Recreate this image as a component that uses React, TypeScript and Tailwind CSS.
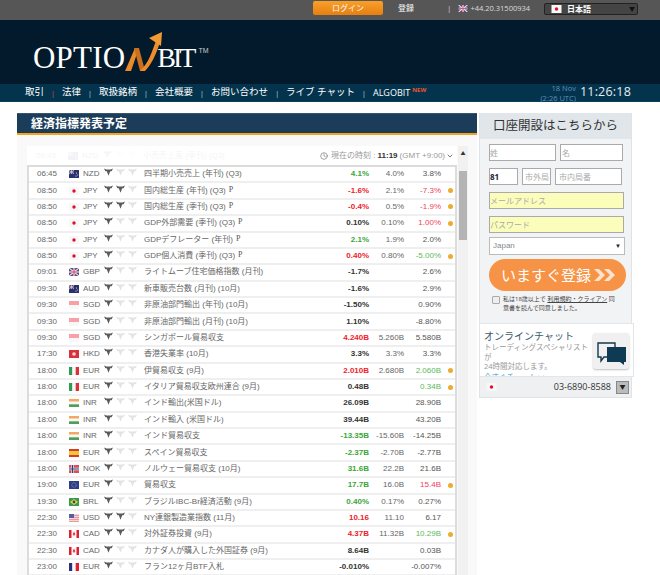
import React from "react";
import { Clock, ChevronDown } from "lucide-react";

type Row = {
  time: string;
  flag: string;
  ccy: string;
  bulls: number;
  name: string;
  p?: boolean;
  actual: string;
  actualColor?: string;
  forecast?: string;
  prev: string;
  prevColor?: string;
  dot?: boolean;
};

const green = "text-[#3aa63a]";
const red = "text-[#f0202c]";
const pink = "text-[#f2405a]";
const lime = "text-[#5cb85c]";

const rows: Row[] = [
  { time: "06:45", flag: "nz", ccy: "NZD", bulls: 1, name: "四半期小売売上 (年刊) (Q3)", actual: "4.1%", actualColor: green, forecast: "4.0%", prev: "3.8%" },
  { time: "08:50", flag: "jp", ccy: "JPY", bulls: 2, name: "国内総生産 (年刊) (Q3)", p: true, actual: "-1.6%", actualColor: red, forecast: "2.1%", prev: "-7.3%", prevColor: pink, dot: true },
  { time: "08:50", flag: "jp", ccy: "JPY", bulls: 2, name: "国内総生産 (季刊) (Q3)", p: true, actual: "-0.4%", actualColor: red, forecast: "0.5%", prev: "-1.9%", prevColor: pink, dot: true },
  { time: "08:50", flag: "jp", ccy: "JPY", bulls: 1, name: "GDP外部需要 (季刊) (Q3)", p: true, actual: "0.10%", forecast: "0.10%", prev: "1.00%", prevColor: pink, dot: true },
  { time: "08:50", flag: "jp", ccy: "JPY", bulls: 1, name: "GDPデフレーター (年刊)", p: true, actual: "2.1%", actualColor: green, forecast: "1.9%", prev: "2.0%" },
  { time: "08:50", flag: "jp", ccy: "JPY", bulls: 1, name: "GDP個人消費 (季刊) (Q3)", p: true, actual: "0.40%", actualColor: red, forecast: "0.80%", prev: "-5.00%", prevColor: lime, dot: true },
  { time: "09:01", flag: "gb", ccy: "GBP", bulls: 1, name: "ライトムーブ住宅価格指数 (月刊)", actual: "-1.7%", prev: "2.6%" },
  { time: "09:30", flag: "au", ccy: "AUD", bulls: 1, name: "新車販売台数 (月刊) (10月)", actual: "-1.6%", prev: "2.9%" },
  { time: "09:30", flag: "sg", ccy: "SGD", bulls: 1, name: "非原油部門輸出 (年刊) (10月)", actual: "-1.50%", prev: "0.90%" },
  { time: "09:30", flag: "sg", ccy: "SGD", bulls: 1, name: "非原油部門輸出 (月刊) (10月)", actual: "1.10%", prev: "-8.80%" },
  { time: "09:30", flag: "sg", ccy: "SGD", bulls: 1, name: "シンガポール貿易収支", actual: "4.240B", actualColor: red, forecast: "5.260B", prev: "5.580B" },
  { time: "17:30", flag: "hk", ccy: "HKD", bulls: 1, name: "香港失業率 (10月)", actual: "3.3%", forecast: "3.3%", prev: "3.3%" },
  { time: "18:00", flag: "it", ccy: "EUR", bulls: 1, name: "伊貿易収支 (9月)", actual: "2.010B", actualColor: red, forecast: "2.680B", prev: "2.060B", prevColor: lime, dot: true },
  { time: "18:00", flag: "it", ccy: "EUR", bulls: 1, name: "イタリア貿易収支欧州連合 (9月)", actual: "0.48B", prev: "0.34B", prevColor: lime, dot: true },
  { time: "18:00", flag: "in", ccy: "INR", bulls: 1, name: "インド輸出(米国ドル)", actual: "26.09B", prev: "28.90B" },
  { time: "18:00", flag: "in", ccy: "INR", bulls: 1, name: "インド輸入 (米国ドル)", actual: "39.44B", prev: "43.20B" },
  { time: "18:00", flag: "in", ccy: "INR", bulls: 1, name: "インド貿易収支", actual: "-13.35B", actualColor: green, forecast: "-15.60B", prev: "-14.25B" },
  { time: "18:00", flag: "es", ccy: "EUR", bulls: 1, name: "スペイン貿易収支", actual: "-2.37B", actualColor: green, forecast: "-2.70B", prev: "-2.77B" },
  { time: "18:00", flag: "no", ccy: "NOK", bulls: 1, name: "ノルウェー貿易収支 (10月)", actual: "31.6B", actualColor: green, forecast: "22.2B", prev: "21.6B" },
  { time: "19:00", flag: "eu", ccy: "EUR", bulls: 1, name: "貿易収支", actual: "17.7B", actualColor: green, forecast: "16.0B", prev: "15.4B", prevColor: pink, dot: true },
  { time: "19:30", flag: "br", ccy: "BRL", bulls: 1, name: "ブラジルIBC-Br経済活動 (9月)", actual: "0.40%", actualColor: green, forecast: "0.17%", prev: "0.27%" },
  { time: "22:30", flag: "us", ccy: "USD", bulls: 2, name: "NY連銀製造業指数 (11月)", actual: "10.16", actualColor: red, forecast: "11.10", prev: "6.17" },
  { time: "22:30", flag: "ca", ccy: "CAD", bulls: 2, name: "対外証券投資 (9月)", actual: "4.37B", actualColor: red, forecast: "11.32B", prev: "10.29B", prevColor: lime, dot: true },
  { time: "22:30", flag: "ca", ccy: "CAD", bulls: 1, name: "カナダ人が購入した外国証券 (9月)", actual: "8.64B", prev: "0.03B" },
  { time: "23:00", flag: "fr", ccy: "EUR", bulls: 1, name: "フラン12ヶ月BTF入札", actual: "-0.010%", prev: "-0.007%" },
];

const Flag = ({ code, className = "w-[10px] h-[8px]" }: { code: string; className?: string }) => {
  const union = (
    <>
      <rect width="10" height="8" fill="#3b4d8f" />
      <path d="M0 0L10 8M10 0L0 8" stroke="#e8dfe4" strokeWidth="1.2" />
      <path d="M5 0V8M0 4H10" stroke="#e8dfe4" strokeWidth="2.2" />
      <path d="M5 0V8M0 4H10" stroke="#cf4a5c" strokeWidth="1" />
    </>
  );
  const southern = (
    <>
      <rect width="10" height="8" fill="#28306f" />
      <path d="M0 0L5 4M5 0L0 4M2.5 0V4M0 2H5" stroke="#d9c3ce" strokeWidth=".8" />
      <circle cx="7.5" cy="3" r=".6" fill="#eee" />
      <circle cx="7" cy="6" r=".6" fill="#eee" />
      <circle cx="8.7" cy="5" r=".5" fill="#eee" />
    </>
  );
  return (
    <svg viewBox="0 0 10 8" className={`${className} shrink-0`}>
      {code === "jp" && (
        <>
          <rect width="10" height="8" fill="#f7f7f7" />
          <circle cx="5" cy="4" r="1.7" fill="#e0102a" />
        </>
      )}
      {code === "gb" && union}
      {code === "nz" && southern}
      {code === "au" && southern}
      {code === "sg" && (
        <>
          <rect width="10" height="8" fill="#f7f7f7" />
          <rect width="10" height="4" fill="#f7a0a6" />
        </>
      )}
      {code === "hk" && (
        <>
          <rect width="10" height="8" fill="#d9303c" />
          <circle cx="5" cy="4" r="1.8" fill="#f6d4d4" />
        </>
      )}
      {code === "it" && (
        <>
          <rect width="3.4" height="8" fill="#2f9a54" />
          <rect x="3.4" width="3.3" height="8" fill="#f6f6f6" />
          <rect x="6.7" width="3.3" height="8" fill="#d9303c" />
        </>
      )}
      {code === "in" && (
        <>
          <rect width="10" height="2.7" fill="#f5a860" />
          <rect y="2.7" width="10" height="2.6" fill="#f6f6f6" />
          <rect y="5.3" width="10" height="2.7" fill="#4f9f5a" />
        </>
      )}
      {code === "es" && (
        <>
          <rect width="10" height="8" fill="#d63a2e" />
          <rect y="2" width="10" height="4" fill="#f5c52f" />
        </>
      )}
      {code === "no" && (
        <>
          <rect width="10" height="8" fill="#d8505c" />
          <path d="M3.5 0V8M0 4H10" stroke="#eee" strokeWidth="2.4" />
          <path d="M3.5 0V8M0 4H10" stroke="#2f3f80" strokeWidth="1.2" />
        </>
      )}
      {code === "eu" && (
        <>
          <rect width="10" height="8" fill="#2b3f8f" />
          <circle cx="5" cy="4" r="2.2" fill="none" stroke="#c9b44a" strokeWidth=".7" strokeDasharray=".8 .6" />
        </>
      )}
      {code === "br" && (
        <>
          <rect width="10" height="8" fill="#3a9a4c" />
          <path d="M5 1L9 4L5 7L1 4Z" fill="#e8d13c" />
          <circle cx="5" cy="4" r="1.4" fill="#2d4a8c" />
        </>
      )}
      {code === "us" && (
        <>
          <rect width="10" height="8" fill="#f3d6d8" />
          <path d="M0 1.5H10M0 3.5H10M0 5.5H10M0 7.5H10" stroke="#e88a90" strokeWidth=".8" />
          <rect width="5" height="4" fill="#5660a0" />
        </>
      )}
      {code === "ca" && (
        <>
          <rect width="10" height="8" fill="#f7f7f7" />
          <rect width="2.5" height="8" fill="#e02030" />
          <rect x="7.5" width="2.5" height="8" fill="#e02030" />
          <path d="M5 1.8L6.4 4.6L5.3 4.7V6H4.7V4.7L3.6 4.6Z" fill="#e02030" />
        </>
      )}
      {code === "fr" && (
        <>
          <rect width="3.4" height="8" fill="#23337f" />
          <rect x="3.4" width="3.3" height="8" fill="#f6f6f6" />
          <rect x="6.7" width="3.3" height="8" fill="#e02030" />
        </>
      )}
    </svg>
  );
};

const Bull = ({ on }: { on: boolean }) => (
  <svg viewBox="0 0 9 8" className="w-[9px] h-[8px]">
    <path
      d="M0 .5L2.4 1.6H6.6L9 .5L7.6 3.2H6.2L4.5 7.8L2.8 3.2H1.4Z"
      fill={on ? "#5a5a5a" : "#e3e3e3"}
    />
  </svg>
);

const Bulls = ({ n }: { n: number }) => (
  <div className="flex gap-[3px] w-[40px] -mt-[4px] shrink-0">
    <Bull on={n >= 1} />
    <Bull on={n >= 2} />
    <Bull on={n >= 3} />
  </div>
);

const TableRow = ({ r }: { r: Row }) => (
  <div className="flex items-center h-[16.375px] shrink-0 border-b-2 border-[#efefef] bg-white pl-[8px] text-[8px] text-[#666] font-['Liberation_Sans','Noto_Sans_CJK_JP',sans-serif]">
    <span className="w-[32px] shrink-0">{r.time}</span>
    <Flag code={r.flag} />
    <span className="w-[21px] ml-[4px] shrink-0">{r.ccy}</span>
    <Bulls n={r.bulls} />
    <span className="w-[170px] shrink-0 whitespace-nowrap">
      {r.name}
      {r.p && <span className="ml-[3px] font-['Liberation_Serif',serif] text-[8px] relative -top-[1px] text-[#555]">P</span>}
    </span>
    <span className={`w-[55px] shrink-0 text-right font-bold whitespace-nowrap ${r.actualColor ?? "text-[#333]"}`}>{r.actual}</span>
    <span className="w-[35px] shrink-0 text-right whitespace-nowrap">{r.forecast}</span>
    <span className={`w-[37px] shrink-0 text-right whitespace-nowrap ${r.prevColor ?? "text-[#555]"}`}>{r.prev}</span>
    {r.dot && <span className="ml-[7px] w-[5px] h-[5px] rounded-full bg-[#eeab2f] shrink-0" />}
  </div>
);

const Field = ({ label, className, value }: { label?: string; className: string; value?: string }) => (
  <div className={`h-[17px] border border-[#aaa] flex items-center text-[8px] overflow-hidden whitespace-nowrap ${className}`}>
    {value ? <span className="text-[#223] font-bold">{value}</span> : <span className="text-[#aaa]">{label}</span>}
  </div>
);

const Logo = () => (
  <div className="flex items-end font-['Liberation_Serif',serif] text-white text-[31px] leading-[24px] mt-[11px] ml-[33px]">
    <span className="tracking-[.2px]">OPTIO</span>
    <svg viewBox="0 0 38 42" className="w-[38px] h-[42px] -mb-[3px] -mr-[6px]">
      <path d="M0 40L10 17L14 17L6 40Z" fill="#e98a2b" />
      <path d="M9 17L14 17L20 40L15 40Z" fill="#c96f1d" />
      <path d="M15 40C24 32 27 20 31 10L35 11C31 24 26 34 20 40Z" fill="#f08d2a" />
      <path d="M24 7L37 1L36 15Z" fill="#f29a35" />
    </svg>
    <span className="text-[28px] tracking-[-3px]">BIT</span>
    <span className="text-[7px] leading-none self-start ml-[5px] mt-[16px] font-['Liberation_Sans',sans-serif] text-[#ccc]">TM</span>
  </div>
);

const navItems = ["取引", "法律", "取扱銘柄", "会社概要", "お問い合わせ", "ライブ チャット"];

export default function App() {
  return (
    <div className="w-[660px] h-[575px] overflow-hidden bg-white font-['Open_Sans','Noto_Sans_CJK_JP',sans-serif]">
      {/* top bar */}
      <div className="h-[20px] bg-[#565656] flex items-start text-[8px] pl-[313px]">
        <div className="w-[70px] h-[14px] mt-[1px] rounded-[2px] bg-gradient-to-b from-[#f7a02a] to-[#e87e10] text-white flex items-center justify-center">ログイン</div>
        <span className="ml-[15px] mt-[2px] font-bold text-[#d5d5d5]">登録</span>
        <span className="ml-[33px] mt-[2px] text-[#ccc]">|</span>
        <Flag code="gb" className="ml-[7px] mt-[5px] w-[10px] h-[7px]" />
        <span className="ml-[2px] mt-[3px] text-[#ddd] text-[7.5px]">+44.20.31500934</span>
        <div className="ml-[14px] mt-[3px] w-[94px] h-[12px] rounded-[2px] bg-[#444] border border-[#222] flex items-center pl-[6px] pr-[2px]">
          <Flag code="jp" className="w-[11px] h-[8px]" />
          <span className="ml-[5px] text-white font-bold">日本語</span>
          <span className="ml-auto text-[#111] text-[6px]">▼</span>
        </div>
      </div>

      {/* logo band */}
      <div className="h-[64px] bg-[#021a2b] overflow-hidden">
        <Logo />
      </div>

      {/* nav */}
      <div className="h-[18px] bg-[#03334d] flex items-center pl-[25px] pr-[29px] text-white text-[9.5px] whitespace-nowrap border-b border-[#0a4058]">
        {navItems.map((n, i) => (
          <React.Fragment key={n}>
            <span>{n}</span>
            <span className={`mx-[6.8px] text-[8px] ${i === 0 ? "text-[#d05050]" : "text-[#b8c8d0]"}`}>|</span>
          </React.Fragment>
        ))}
        <span className="text-[9px]">ALGOBIT</span>
        <span className="text-[6px] font-bold text-[#e8552d] ml-[2px] -mt-[5px]">NEW</span>
        <div className="ml-auto text-right text-[7.5px] leading-[10px] text-[#5b94b8] mr-[4px]">
          18 Nov
          <br />
          (2:26 UTC)
        </div>
        <span className="text-[12.5px] text-[#e8eef2] tracking-[.2px]">11:26:18</span>
      </div>

      {/* main */}
      <div className="flex pt-[11px] pl-[17px] items-start">
        <div className="w-[460px] shrink-0">
          <div className="h-[22px] bg-[#1c3d5a] border-t border-[#37566e] border-b-2 border-b-[#f5a31a] text-white font-bold text-[12px] flex items-center pl-[14px]">経済指標発表予定</div>
          <div className="bg-[#f9f9f9] pl-[10px] pt-[11px] pr-[9px] h-[440px] flex gap-[1px]">
            <div className="w-[430px] shrink-0">
              <div className="h-[19px] bg-white flex items-center pl-[9px] pr-[3px] text-[8px] relative font-['Liberation_Sans','Noto_Sans_CJK_JP',sans-serif]">
                <div className="flex items-center opacity-[.05] text-[#333]">
                  <span className="w-[32px]">06:45</span>
                  <Flag code="nz" />
                  <span className="w-[21px] ml-[4px]">NZD</span>
                  <Bulls n={1} />
                  <span>小売売上高 (季刊) (Q3)</span>
                </div>
                <div className="ml-auto flex items-center text-[#999]">
                  <Clock className="w-[8px] h-[8px] mr-[3px] text-[#777]" />
                  <span>現在の時刻 : </span>
                  <span className="font-bold text-[#333] ml-[2px]">11:19</span>
                  <span className="ml-[2px]">(GMT +9:00)</span>
                  <ChevronDown className="w-[8px] h-[8px] ml-[1px] text-[#333]" />
                </div>
              </div>
              <div className="border-t-2 border-l-2 border-r-2 border-[#dcdcdc]">
                {rows.map((r, i) => (
                  <TableRow key={i} r={r} />
                ))}
              </div>
            </div>
            <div className="w-[10px] bg-[#f1f1f1] flex flex-col items-center shrink-0">
              <span className="text-[5px] text-[#333] leading-[10px] mt-[2px]">▲</span>
              <div className="w-[8px] h-[69px] bg-[#b4b4b4] mt-[13px]" />
            </div>
          </div>
        </div>

        {/* account form */}
        <div className="w-[155px] ml-[2px] shrink-0">
          <div className="w-[153px] border-l border-r border-[#dfe3e6] bg-[#f2f3f4]">
            <div className="h-[26px] bg-[#e1e6ea] text-center text-[12.5px] leading-[26px] text-[#333]">口座開設はこちらから</div>
            <div className="pl-[9px] pt-[5px] pb-[10px] h-[184px]">
              <div className="flex gap-[4px]">
                <Field label="姓" className="w-[67px] bg-white" />
                <Field label="名" className="w-[63px] bg-white pl-[1px]" />
              </div>
              <div className="flex gap-[4px] mt-[7px]">
                <Field value="81" className="w-[29px] bg-white" />
                <Field label="市外局" className="w-[29px] bg-white pl-[2px]" />
                <Field label="市内局番" className="w-[67px] bg-white pl-[3px]" />
              </div>
              <Field label="メールアドレス" className="w-[135px] bg-[#fbfdbb] mt-[7px]" />
              <Field label="パスワード" className="w-[135px] bg-[#fbfdbb] mt-[7px]" />
              <div className="w-[136px] h-[18px] mt-[4px] bg-white border border-[#bbb] flex items-center justify-between px-[3px] text-[8px] text-[#888] font-['Liberation_Sans',sans-serif]">
                <span>Japan</span>
                <span className="text-[#222] text-[6px]">▼</span>
              </div>
              <div className="w-[137px] h-[32px] mt-[4px] rounded-full bg-[#f79346] flex items-center pl-[12px] text-white text-[15px] whitespace-nowrap">
                いますぐ登録
                <svg viewBox="0 0 24 14" className="w-[24px] h-[14px] ml-[2px]">
                  <path d="M1 1H6L12 7L6 13H1L7 7Z" fill="#fde3cd" />
                  <path d="M11 1H16L22 7L16 13H11L17 7Z" fill="#fde3cd" />
                </svg>
              </div>
              <div className="flex mt-[4px] ml-[3px]">
                <div className="w-[8px] h-[8px] mt-[1px] rounded-[1px] border border-[#aaa] bg-[#eee] shrink-0" />
                <p className="ml-[3px] text-[6px] leading-[9px] text-[#444] whitespace-nowrap">
                  私は18歳以上で <span className="underline">利用規約・クライアン</span> 同
                  <br />
                  意書を読んで同意しました。
                </p>
              </div>
            </div>
          </div>

          {/* chat */}
          <div className="h-[54px] w-[155px] border border-[#e3e6e8] bg-white flex overflow-hidden relative">
            <div className="pl-[4px] pt-[6px] w-[110px] shrink-0">
              <div className="text-[10px] leading-[13px] text-[#3b5a6b] whitespace-nowrap">オンラインチャット</div>
              <p className="text-[7.5px] leading-[9.5px] text-[#999] w-[107px]">トレーディングスペシャリストが</p>
              <p className="text-[7.5px] leading-[9.5px] text-[#999]">24時間対応します。</p>
              <p className="text-[7.5px] leading-[10px] text-[#3aa0d0] whitespace-nowrap">今すぐチャット &gt;&gt;</p>
            </div>
            <div className="w-[36px] h-[36px] mt-[9px] ml-[3px] rounded-[3px] bg-[#f0f0f0] shadow-[0_1px_2px_rgba(0,0,0,.25)] flex items-center justify-center">
              <svg viewBox="0 0 32 28" className="w-[32px] h-[28px]">
                <path d="M3 6H20V20H9L6 24V20H3Z" fill="none" stroke="#12384f" strokeWidth="1.4" />
                <path d="M12 10H31V25H29V28L25 25H12Z" fill="#0f3a54" />
              </svg>
            </div>
          </div>
          <div className="h-[21px] w-[153px] bg-[#eef0f2] border-l border-r border-b border-[#dfe3e6] flex items-center pl-[6px]">
            <Flag code="jp" className="w-[11px] h-[8px]" />
            <span className="ml-auto text-[9px] text-[#333]">03-6890-8588</span>
            <div className="w-[13px] h-[13px] ml-[5px] mr-[2px] bg-[#bbb] border border-[#888] flex items-center justify-center text-[6px] text-[#222]">▼</div>
          </div>
        </div>
      </div>
    </div>
  );
}
